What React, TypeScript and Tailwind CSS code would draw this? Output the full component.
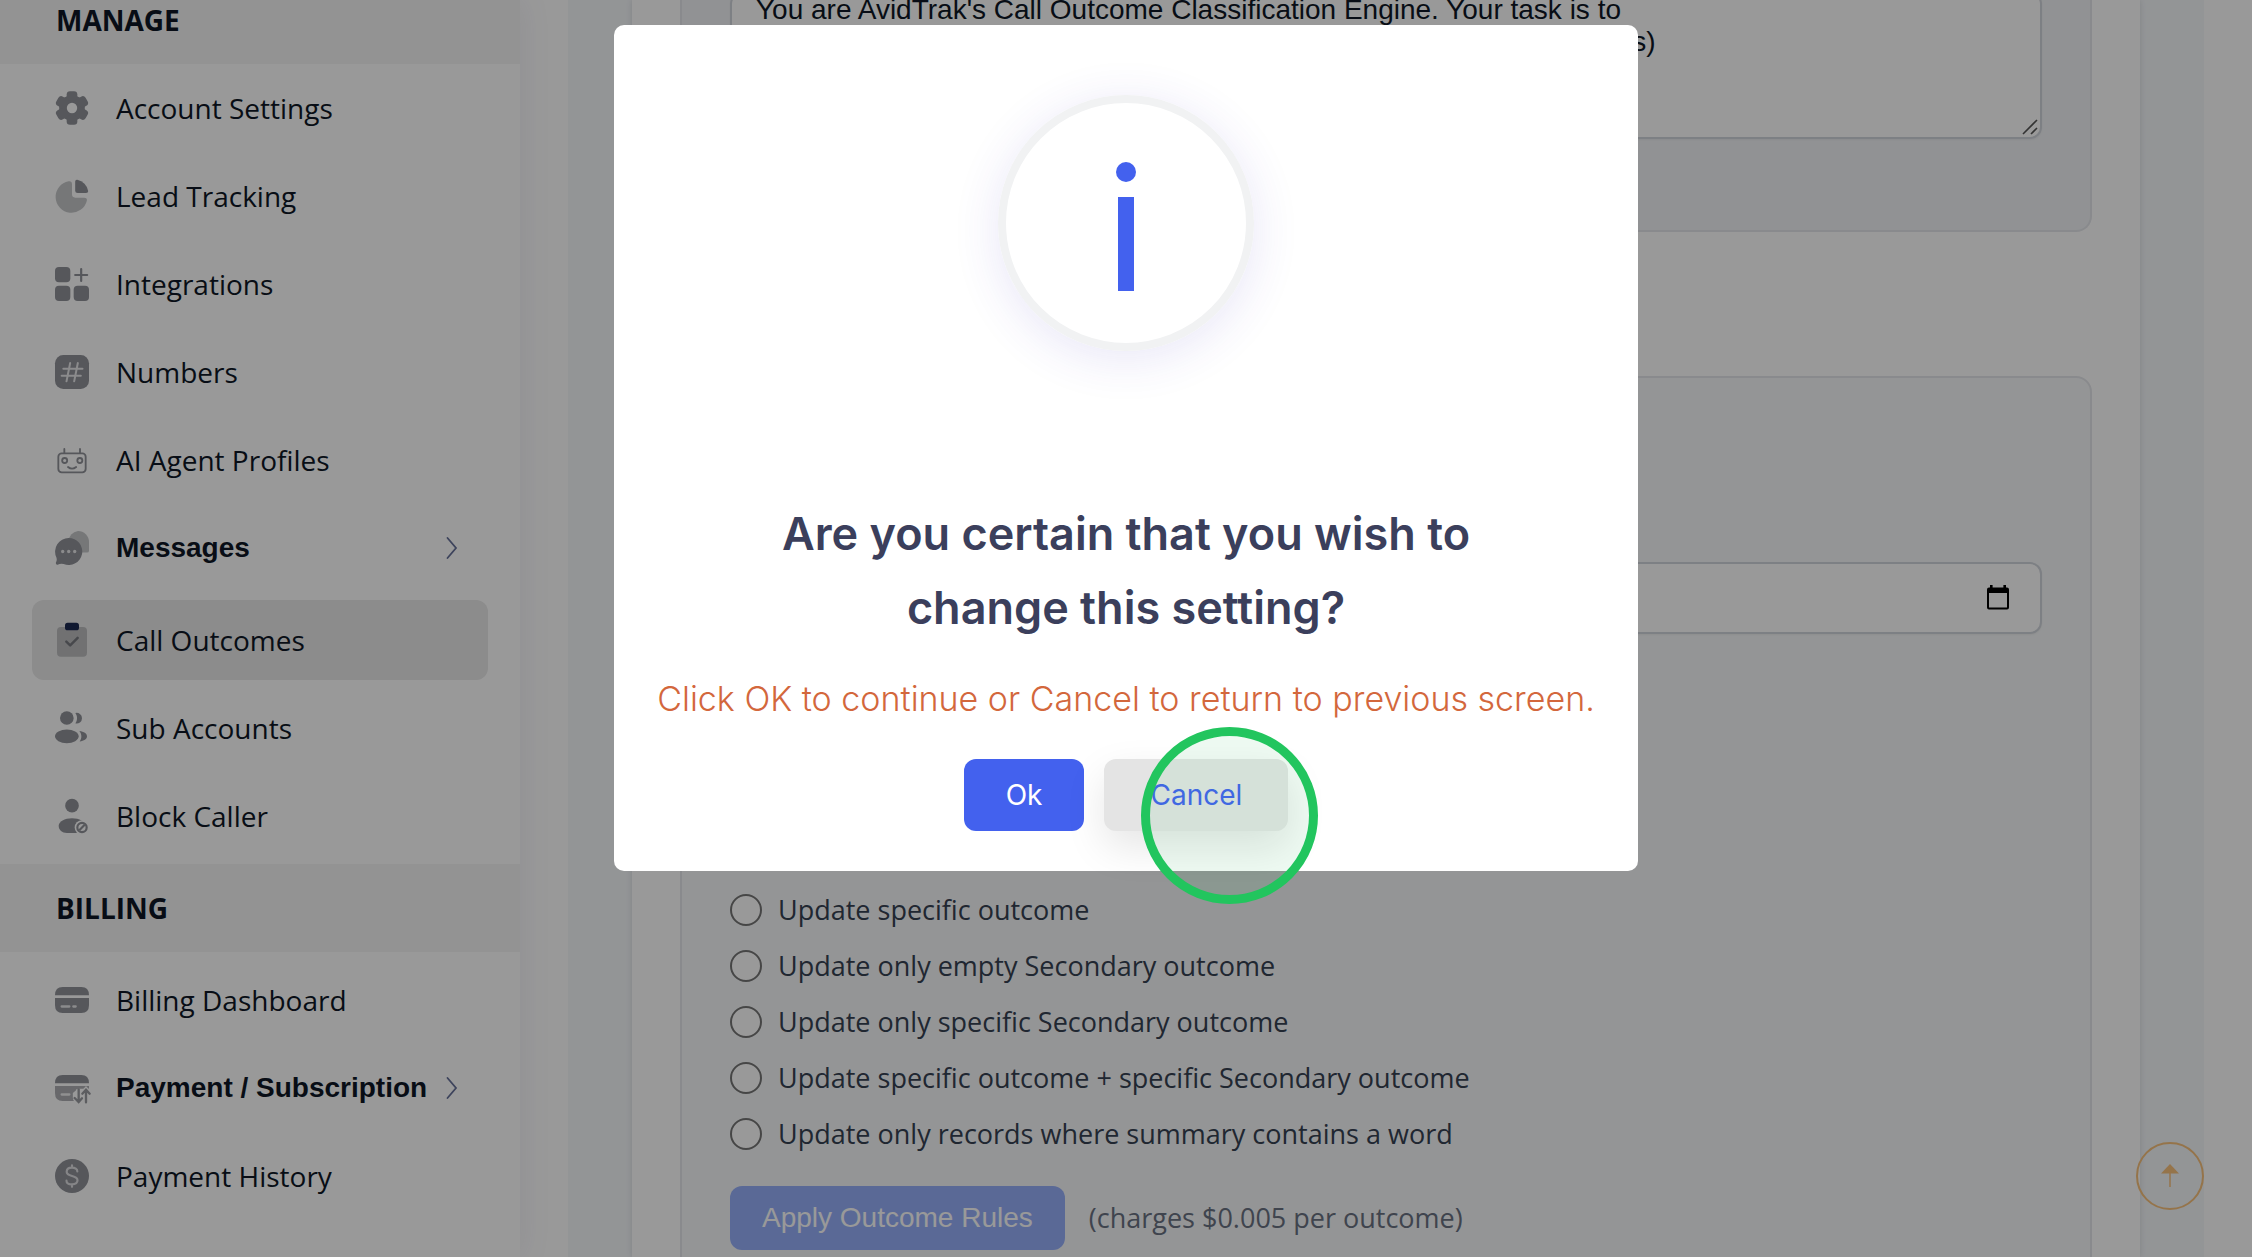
import React from "react";

const DARK = "#8f9198";
const LIGHT = "#c5c7c9";

function Icon({ children }: { children: React.ReactNode }) {
  return (
    <svg viewBox="0 0 24 24" className="size-10 shrink-0" fill={DARK} aria-hidden="true">
      {children}
    </svg>
  );
}

const GearIcon = () => (
  <Icon>
    <circle cx="12" cy="12" r="7.7" />
    <rect x="8.8" y="1.9" width="6.4" height="20.2" rx="2" />
    <rect x="8.8" y="1.9" width="6.4" height="20.2" rx="2" transform="rotate(60 12 12)" />
    <rect x="8.8" y="1.9" width="6.4" height="20.2" rx="2" transform="rotate(120 12 12)" />
    <circle cx="12" cy="12" r="3.1" fill="#fff" />
  </Icon>
);

const PieIcon = () => (
  <Icon>
    <path
      fill={LIGHT}
      d="M10 3.2Q12 2.9 12 5V11Q12 13 14 13H19.3Q21.3 13 20.9 14.8A9.5 9.5 0 1 1 10 3.2Z"
    />
    <path d="M15.2 2.3A8.2 8.2 0 0 1 21.7 9Q21.8 10.2 20.4 10.2H15.4Q13.9 10.2 13.9 8.8V3.4Q13.9 2.1 15.2 2.3Z" />
  </Icon>
);

const GridPlusIcon = () => (
  <Icon>
    <rect x="1.8" y="1.8" width="9.2" height="9.2" rx="2.4" />
    <rect x="1.8" y="13" width="9.2" height="9.2" rx="2.4" />
    <rect x="13" y="13" width="9.2" height="9.2" rx="2.4" />
    <path d="M17.5 3V10.2M13.9 6.6H21.1" stroke={DARK} strokeWidth="1.3" strokeLinecap="round" />
  </Icon>
);

const HashIcon = () => (
  <Icon>
    <rect x="1.8" y="1.8" width="20.4" height="20.4" rx="5" />
    <path
      d="M10.9 6.6L8.7 17.6M15.5 6.6L13.3 17.6M6.8 10H18.3M5.8 14.2H17.3"
      stroke="#e8e8ea"
      strokeWidth="1.2"
      strokeLinecap="round"
    />
  </Icon>
);

const RobotIcon = () => (
  <Icon>
    <g fill="none" stroke={DARK} strokeWidth="1.1" strokeLinecap="round">
      <rect x="3.8" y="8" width="16.4" height="11.4" rx="2" />
      <path d="M7.4 5.4V7.8M16.8 5.4V7.8M9.6 16.2Q12 18.2 14.5 16.2" />
      <circle cx="7.6" cy="12.3" r="1.5" />
      <circle cx="16.7" cy="12.3" r="1.5" />
    </g>
  </Icon>
);

const ChatIcon = () => (
  <Icon>
    <path fill={LIGHT} d="M15.6 1.8A6.6 6.6 0 0 1 22.2 8.4V13.6Q22.2 14.7 21 14.7H15.6A6.5 6.5 0 0 1 15.6 1.8Z" />
    <path d="M10 6A8.1 8.1 0 1 1 7 21.6Q5 21.2 3.4 22Q2 22.2 2.4 20.6Q3.2 19.2 2.6 17.6A8.2 8.2 0 0 1 10 6Z" />
    <g fill="#e8e8ea">
      <circle cx="6.4" cy="14.1" r="1" />
      <circle cx="10" cy="14.1" r="1" />
      <circle cx="13.6" cy="14.1" r="1" />
    </g>
  </Icon>
);

const ClipboardIcon = () => (
  <Icon>
    <rect x="3" y="4.2" width="18" height="17.8" rx="2.4" fill="#bcbdbf" />
    <rect x="7.8" y="1.7" width="8.4" height="4.5" rx="1.6" fill="#1c2850" />
    <path
      d="M8.6 13L10.9 15.2L15.4 10.7"
      fill="none"
      stroke="#77797f"
      strokeWidth="1.5"
      strokeLinecap="round"
      strokeLinejoin="round"
    />
  </Icon>
);

const UsersIcon = () => (
  <Icon>
    <circle cx="8.9" cy="6" r="4.1" />
    <ellipse cx="8.9" cy="17" rx="7.1" ry="4.1" />
    <path d="M14 3A3.2 3.2 0 1 1 14 9.2C15.4 7.5 15.4 4.7 14 3Z" />
    <path d="M16.4 13.8C19.2 14.2 21 15.2 21 16.9S19.2 19.6 16.6 20.1C18 18.3 18 15.8 16.4 13.8Z" />
  </Icon>
);

const BlockUserIcon = () => (
  <Icon>
    <circle cx="12" cy="5.8" r="4.1" />
    <path d="M4 17.9C4 15.3 7.6 13.3 12 13.3S20 15.3 20 17.9V20Q19.6 22.2 17 22.2H9C6 22.2 4 20.4 4 17.9Z" />
    <circle cx="18" cy="18.9" r="4.4" fill="#fff" />
    <circle cx="18" cy="18.9" r="2.8" fill="none" stroke={DARK} strokeWidth="1.3" />
    <path d="M16.4 20.5L19.6 17.3" stroke={DARK} strokeWidth="1.3" />
  </Icon>
);

const CardIcon = () => (
  <Icon>
    <path d="M1.8 9.2Q1.8 4.2 6.4 4.2H17.6Q22.2 4.2 22.2 9.2Z" />
    <path d="M1.8 10.8H22.2V15Q22.2 19.8 17.6 19.8H6.4Q1.8 19.8 1.8 15Z" />
    <path d="M5.8 15.9H10.4M12.8 15.9H14.2" stroke="#e8e8ea" strokeWidth="1.4" strokeLinecap="round" />
  </Icon>
);

const CardSwapIcon = () => (
  <Icon>
    <path d="M1.8 9.2Q1.8 4.2 6.4 4.2H17.6Q22.2 4.2 22.2 9.2Z" />
    <path fill="#adaeb3" d="M1.8 10.8H22.2V12.5H15.5L12.5 15V18L13.6 19.8H6.4Q1.8 19.8 1.8 15Z" />
    <path d="M5.8 15.9H10.4" stroke="#f0f0f2" strokeWidth="1.4" strokeLinecap="round" />
    <path
      d="M16 12.8V20M13.6 18L16 20.4L18 18.2M20.4 20.6V13.4M18.2 15.4L20.4 13L22.6 15.4"
      fill="none"
      stroke="#fff"
      strokeWidth="3"
    />
    <path
      d="M16 12.8V20M13.6 18L16 20.4L18 18.2M20.4 20.6V13.4M18.2 15.4L20.4 13L22.6 15.4"
      fill="none"
      stroke="#9a9ba0"
      strokeWidth="1.4"
      strokeLinecap="round"
    />
  </Icon>
);

const DollarIcon = () => (
  <Icon>
    <circle cx="12" cy="12" r="10.2" />
    <path
      d="M15.2 9.3C15.2 7.9 13.8 7 12 7S8.8 7.9 8.8 9.5C8.8 11.2 10.4 11.6 12 12S15.3 12.8 15.3 14.6C15.3 16.2 13.8 17 12 17S8.7 16.2 8.7 14.8M12 5.6V7M12 17V18.5"
      fill="none"
      stroke="#dedee2"
      strokeWidth="1.3"
      strokeLinecap="round"
    />
  </Icon>
);

type Item = { label: string; icon: React.FC; group?: boolean; active?: boolean };

const manage: Item[] = [
  { label: "Account Settings", icon: GearIcon },
  { label: "Lead Tracking", icon: PieIcon },
  { label: "Integrations", icon: GridPlusIcon },
  { label: "Numbers", icon: HashIcon },
  { label: "AI Agent Profiles", icon: RobotIcon },
  { label: "Messages", icon: ChatIcon, group: true },
  { label: "Call Outcomes", icon: ClipboardIcon, active: true },
  { label: "Sub Accounts", icon: UsersIcon },
  { label: "Block Caller", icon: BlockUserIcon },
];

const billing: Item[] = [
  { label: "Billing Dashboard", icon: CardIcon },
  { label: "Payment / Subscription", icon: CardSwapIcon, group: true },
  { label: "Payment History", icon: DollarIcon },
];

function NavItem({ label, icon: Glyph, group, active }: Item) {
  if (group) {
    return (
      <button
        type="button"
        className="flex h-20 w-full items-center gap-6 rounded-xl px-5 font-['Liberation_Sans',sans-serif] text-[28px] font-bold whitespace-nowrap"
      >
        <Glyph />
        <span className="-mr-3">{label}</span>
        <svg viewBox="0 0 12 24" className="mr-2.5 ml-auto h-6 w-3 shrink-0" fill="none" aria-hidden="true">
          <path d="M1.5 2L10 12L1.5 22" stroke="#667199" strokeWidth="1.8" strokeLinecap="round" />
        </svg>
      </button>
    );
  }
  return (
    <a
      href="#"
      className={`flex h-20 items-center gap-6 rounded-xl px-5 text-[28px] ${active ? "mt-1 bg-[#e9e9e9]" : ""}`}
    >
      <Glyph />
      <span>{label}</span>
    </a>
  );
}

function NavSection({ title, items, className }: { title: string; items: Item[]; className: string }) {
  return (
    <section>
      <h2 className="flex h-[88px] items-center bg-[#f5f5f5] px-14 text-[28px] font-bold">{title}</h2>
      <ul className={`flex flex-col gap-2 px-8 ${className}`}>
        {items.map((item) => (
          <li key={item.label}>
            <NavItem {...item} />
          </li>
        ))}
      </ul>
    </section>
  );
}

const rules = [
  "Update specific outcome",
  "Update only empty Secondary outcome",
  "Update only specific Secondary outcome",
  "Update specific outcome + specific Secondary outcome",
  "Update only records where summary contains a word",
];

const prompt =
  "You are AvidTrak's Call Outcome Classification Engine. Your task is to\nclassify each call transcript into one outcome (and Secondary outcomes)";

function ConfirmDialog() {
  return (
    <div
      role="dialog"
      aria-modal="true"
      aria-labelledby="confirm-title"
      className="flex w-[1024px] flex-col items-center rounded-[10px] bg-white px-10 pt-[70px] pb-10 font-[Inter,sans-serif]"
    >
      <div className="flex size-64 items-center justify-center rounded-full border-8 border-[#f1f2f3] pt-2 shadow-[0_8px_48px_rgba(67,50,190,0.12)]">
        <svg viewBox="0 0 20 130" className="h-[130px] w-5" fill="#4361ee" aria-hidden="true">
          <circle cx="10" cy="10" r="10" />
          <rect x="2" y="35" width="16" height="94" />
        </svg>
      </div>
      <h1
        id="confirm-title"
        className="mt-[146px] max-w-[760px] text-center text-[45px] leading-[74px] font-semibold text-[#3b3f5c]"
      >
        Are you certain that you wish to change this setting?
      </h1>
      <p className="mt-[30px] text-[34px] leading-[48px] font-light whitespace-nowrap text-[#d3673c]">
        Click OK to continue or Cancel to return to previous screen.
      </p>
      <div className="mt-9 flex gap-5">
        <button type="button" className="h-[72px] rounded-xl bg-[#4361ee] px-[42px] text-[28px] text-white">
          Ok
        </button>
        <button
          type="button"
          className="h-[72px] rounded-xl bg-[#e4e4e4] px-[46px] text-[28px] text-[#4361ee] shadow-[0_16px_40px_rgba(0,0,0,0.1)]"
        >
          Cancel
        </button>
      </div>
    </div>
  );
}

export default function App() {
  return (
    <div className="relative h-screen overflow-hidden bg-white font-['Open_Sans',sans-serif] text-[#0e1726]">
      <div className="flex h-full">
        <nav className="w-[520px] shrink-0 shadow-[0_0_30px_rgba(94,92,154,0.1)]">
          <div className="-mt-6">
            <NavSection title="MANAGE" items={manage} className="pt-1 pb-2" />
            <NavSection title="BILLING" items={billing} className="pt-2" />
          </div>
        </nav>

        <main className="min-w-0 flex-1 px-12">
          <div className="h-full bg-[#f5f8fb] px-16">
            <div className="h-full bg-white px-12 shadow-[0_0_6px_rgba(0,0,0,0.12)]">
              <section className="h-[232px] overflow-hidden rounded-b-2xl border-2 border-t-0 border-gray-200 bg-[#f2f4f7] px-12">
                <div className="relative -mt-2">
                  <textarea
                    aria-label="Classification prompt"
                    defaultValue={prompt}
                    className="block h-[147px] w-full resize-none overflow-hidden rounded-xl border-2 border-gray-300 bg-white px-6 font-['Liberation_Sans',sans-serif] text-[28px] leading-8 shadow-xs"
                  />
                  <svg viewBox="0 0 16 16" className="absolute right-1 bottom-1 size-4" aria-hidden="true">
                    <path d="M1 15L15 1M9 15L15 9" stroke="#555" strokeWidth="1.6" />
                  </svg>
                </div>
              </section>

              <section className="mt-[144px] h-[1000px] rounded-2xl border-2 border-gray-200 bg-[#f7f9fa] px-12 pt-[184px]">
                <div className="relative">
                  <input
                    type="date"
                    aria-label="Outcome date"
                    className="block h-[72px] w-full rounded-xl border-2 border-gray-300 bg-white px-6 text-[28px] shadow-xs [&::-webkit-calendar-picker-indicator]:opacity-0"
                  />
                  <svg
                    viewBox="0 0 22 25"
                    className="pointer-events-none absolute top-[23px] right-[33px] h-[25px] w-[22px]"
                    fill="#000"
                    aria-hidden="true"
                  >
                    <path
                      fillRule="evenodd"
                      d="M3 0H5.6V2.5H16.4V0H19V2.5H20Q22 2.5 22 4.5V22.6Q22 24.6 20 24.6H2Q0 24.6 0 22.6V4.5Q0 2.5 2 2.5H3ZM2 8V22.6H20V8Z"
                    />
                  </svg>
                </div>
                <fieldset aria-label="Outcome rules" className="mt-[260px] flex flex-col gap-6">
                  {rules.map((rule) => (
                    <label key={rule} className="flex h-8 items-center gap-4 text-[27px] text-gray-700">
                      <input
                        type="radio"
                        name="rule"
                        className="size-8 shrink-0 appearance-none rounded-full border-2 border-[#767676] bg-white"
                      />
                      {rule}
                    </label>
                  ))}
                </fieldset>
                <div className="mt-9 flex items-center gap-6">
                  <button
                    type="button"
                    className="h-16 rounded-xl bg-[#96b0fb] px-8 font-['Liberation_Sans',sans-serif] text-[28px] text-white"
                  >
                    Apply Outcome Rules
                  </button>
                  <span className="text-[27px] text-gray-500">(charges $0.005 per outcome)</span>
                </div>
              </section>
            </div>
          </div>
        </main>
      </div>

      <button
        type="button"
        aria-label="Back to top"
        className="absolute right-12 bottom-[47px] flex size-[68px] items-center justify-center rounded-full border-2 border-[#f8c27c]"
      >
        <svg viewBox="0 0 20 24" className="h-6 w-5" aria-hidden="true">
          <path d="M10 0L19 9.5H1Z" fill="#f8c27c" />
          <path d="M10 9V23" stroke="#f8c27c" strokeWidth="1.5" />
        </svg>
      </button>

      <div className="absolute inset-0 flex items-start justify-center bg-black/40 pt-[25px]">
        <ConfirmDialog />
      </div>

      <div className="pointer-events-none absolute top-[727px] left-[1141px] size-[177px] rounded-full border-[9px] border-[#22c55e] bg-[#22c55e]/8" />
    </div>
  );
}
